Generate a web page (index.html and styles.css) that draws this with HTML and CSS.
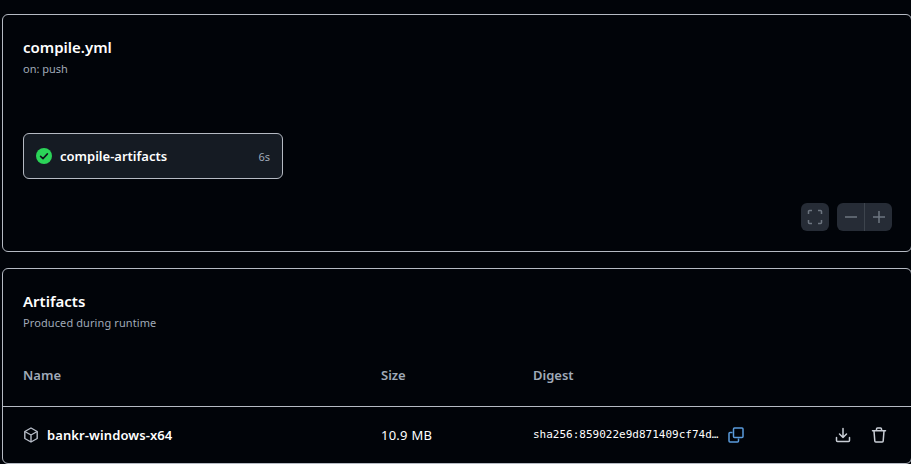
FILE: index.html
```html
<!DOCTYPE html>
<html lang="en">
<head>
    <meta charset="UTF-8">
    <title>compile.yml</title>
    <link rel="stylesheet" href="styles.css">
</head>
<body>

    <section class="card workflow">
        <h2 class="card-title">compile.yml</h2>
        <p class="card-sub">on: push</p>

        <div class="job">
            <svg class="job-check" width="16" height="16" viewBox="0 0 16 16"><circle cx="8" cy="8" r="8" fill="#2bd458"/><path d="M4.6 8.3 7 10.6 11.4 5.9" fill="none" stroke="#10161d" stroke-width="1.6" stroke-linecap="round" stroke-linejoin="round"/></svg>
            <span class="job-name">compile-artifacts</span>
            <span class="job-time">6s</span>
        </div>

        <div class="zoom-controls">
            <button class="zoom-btn" aria-label="Fullscreen">
                <svg width="16" height="16" viewBox="0 0 16 16" fill="none" stroke="#6e7681" stroke-width="1.5"><path d="M1.5 5V2.500a1 1 0 0 1 1-1H5M11 1.500h2.500a1 1 0 0 1 1 1V5M14.500 11v2.500a1 1 0 0 1-1 1H11M5 14.500H2.500a1 1 0 0 1-1-1V11"/></svg>
            </button>
            <div class="zoom-group">
                <button class="zoom-btn" aria-label="Zoom out">
                    <svg width="16" height="16" viewBox="0 0 16 16" fill="none" stroke="#6e7681" stroke-width="1.5"><path d="M2 8h12"/></svg>
                </button>
                <button class="zoom-btn" aria-label="Zoom in">
                    <svg width="16" height="16" viewBox="0 0 16 16" fill="none" stroke="#6e7681" stroke-width="1.5"><path d="M2 8h12M8 2v12"/></svg>
                </button>
            </div>
        </div>
    </section>

    <section class="card artifacts">
        <h2 class="card-title">Artifacts</h2>
        <p class="card-sub">Produced during runtime</p>

        <div class="row row-head">
            <span class="col-name">Name</span>
            <span class="col-size">Size</span>
            <span class="col-digest">Digest</span>
        </div>

        <div class="row row-item">
            <span class="col-name artifact-name">
                <svg width="16" height="16" viewBox="0 0 16 16" fill="none" stroke="#b7bdc8" stroke-width="1.4" stroke-linejoin="round"><path d="M8 1 14.200 4.500V11.500L8 15 1.800 11.500V4.500Z"/><path d="M1.800 4.500 8 8l6.200-3.500M8 8v7"/></svg>
                bankr-windows-x64
            </span>
            <span class="col-size size-value">10.9 MB</span>
            <span class="col-digest digest-value">
                <code>sha256:859022e9d871409cf74d…</code>
                <svg width="16" height="16" viewBox="0 0 16 16" fill="none" stroke="#5a9bdc" stroke-width="1.5" stroke-linejoin="round"><path d="M4.500 5.500H2a1 1 0 0 0-1 1V14a1 1 0 0 0 1 1h7.500a1 1 0 0 0 1-1v-2.500"/><rect x="5.500" y="1" width="9.500" height="9.500" rx="1"/></svg>
            </span>
            <span class="row-actions">
                <svg width="16" height="16" viewBox="0 0 16 16" fill="none" stroke="#c9ced6" stroke-width="1.5" stroke-linecap="round" stroke-linejoin="round"><path d="M1.500 10.500V13.500a1 1 0 0 0 1 1h11a1 1 0 0 0 1-1v-3M8 1.500v9M4.500 7 8 10.500 11.500 7"/></svg>
                <svg width="16" height="16" viewBox="0 0 16 16" fill="none" stroke="#c9ced6" stroke-width="1.5" stroke-linecap="round" stroke-linejoin="round"><path d="M1.500 3.750h13M5.500 3.500V2a1 1 0 0 1 1-1h3a1 1 0 0 1 1 1v1.500M3 4l.8 10a1 1 0 0 0 1 1h6.400a1 1 0 0 0 1-1L13 4"/></svg>
            </span>
        </div>
    </section>

</body>
</html>
```

FILE: styles.css
```css
html, body {
    overflow: hidden;
}

body {
    font-family: "Noto Sans", "Open Sans", sans-serif;
    background-color: #010409;
    color: #fff;
    margin: 0;
    padding: 14px 0 0 2px;
    font-size: 14px;
}

.card {
    border: 1px solid #b5bac3;
    border-radius: 6px;
    margin-right: -1px;
    box-sizing: border-box;
}

.workflow {
    height: 238px;
    padding: 22px 20px 0;
    margin-bottom: 16px;
}

.artifacts {
    height: 196px;
    padding-top: 22px;
}

.card-title {
    font-size: 15px;
    line-height: 20px;
    font-weight: 600;
    margin: 0;
}

.card-sub {
    font-size: 11px;
    line-height: 16px;
    color: #a0aab8;
    margin: 4px 0 0;
}

.artifacts .card-title,
.artifacts .card-sub {
    margin-left: 20px;
}

.artifacts .card-sub {
    letter-spacing: 0.1px;
}

.job {
    display: flex;
    align-items: center;
    width: 260px;
    height: 46px;
    box-sizing: border-box;
    margin-top: 56px;
    padding: 0 12px;
    background-color: #151b23;
    border: 1px solid #b5bac3;
    border-radius: 6px;
}

.job-check {
    flex-shrink: 0;
}

.job-name {
    flex-grow: 1;
    margin-left: 8px;
    font-size: 13px;
    font-weight: 600;
}

.job-time {
    font-size: 11px;
    color: #a0aab8;
}

.zoom-controls {
    display: flex;
    justify-content: flex-end;
    gap: 8px;
    margin-top: 24px;
    margin-right: -1px;
}

.zoom-group {
    display: flex;
    border-radius: 6px;
    overflow: hidden;
}

.zoom-btn {
    display: flex;
    align-items: center;
    justify-content: center;
    width: 28px;
    height: 28px;
    padding: 0;
    background-color: #262c36;
    border: none;
    border-radius: 6px;
}

.zoom-group .zoom-btn {
    width: 27px;
    border-radius: 0;
}

.zoom-group .zoom-btn + .zoom-btn {
    width: 28px;
    border-left: 1px solid #3d444d;
}

.row {
    display: flex;
    align-items: center;
    padding-left: 20px;
}

.row-head {
    height: 46px;
    margin-top: 21px;
    padding-bottom: 8px;
    font-size: 13px;
    font-weight: 600;
    color: #a0aab8;
    border-bottom: 1px solid #b5bac3;
}

.row-item {
    height: 55px;
}

.col-name {
    width: 358px;
    flex-shrink: 0;
}

.col-size {
    width: 152px;
    flex-shrink: 0;
}

.artifact-name {
    display: flex;
    align-items: center;
    gap: 8px;
    font-size: 13px;
    font-weight: 600;
    letter-spacing: 0.1px;
}

.size-value {
    font-size: 13px;
    letter-spacing: 0.25px;
}

.digest-value {
    display: flex;
    align-items: center;
    gap: 10px;
}

.digest-value code {
    font-family: "DejaVu Sans Mono", "Liberation Mono", monospace;
    font-size: 11px;
}

.row-actions {
    display: flex;
    gap: 20px;
    margin-left: 91px;
}
```
